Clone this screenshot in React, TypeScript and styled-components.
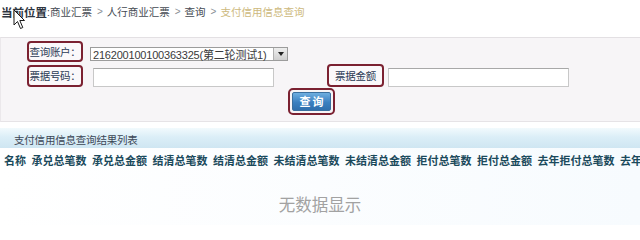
import React from "react";
import styled, { createGlobalStyle } from "styled-components";

const Global = createGlobalStyle`
  html, body { margin: 0; padding: 0; background: #ffffff; }
  body {
    width: 640px;
    height: 225px;
    overflow: hidden;
    font-family: "Liberation Sans", "Noto Sans CJK SC", sans-serif;
  }
`;

const Page = styled.div`
  position: relative;
  width: 640px;
  height: 225px;
  overflow: hidden;
  background: #ffffff;
`;

const Crumbs = styled.div`
  display: flex;
  align-items: center;
  height: 25px;
  padding: 0 0 2px 1px;
  box-sizing: border-box;
  font-size: 10.5px;
  color: #444a52;
  white-space: nowrap;
`;

const CrumbHead = styled.span`
  font-size: 11.5px;
  font-weight: bold;
  color: #2e3540;
`;

const Sep = styled.span`
  color: #8a8f96;
  margin: 0 4px 0 5px;
  font-family: "Liberation Sans", sans-serif;
  font-size: 10px;
`;

const Current = styled.span`
  color: #cdb97c;
`;

const FormPanel = styled.div`
  margin-top: 12px;
  height: 85px;
  box-sizing: border-box;
  border-top: 1px solid #e3e0e3;
  border-bottom: 1px solid #e6e3e6;
  border-left: 1px solid #ebe8eb;
  background: #f7f5f7;
  display: flex;
  flex-direction: column;
`;

const Row = styled.div<{ $top: number }>`
  display: flex;
  align-items: center;
  padding-left: 26px;
  margin-top: ${(p) => p.$top}px;
`;

const Label = styled.div<{ $w: number; $h: number; $ml?: number }>`
  box-sizing: border-box;
  width: ${(p) => p.$w}px;
  height: ${(p) => p.$h}px;
  margin-left: ${(p) => p.$ml ?? 0}px;
  border: 2px solid #7b2131;
  border-radius: 4px;
  background: #faf8fa;
  display: flex;
  align-items: center;
  justify-content: center;
  font-size: 10.5px;
  color: #2a3a54;
  white-space: nowrap;
  letter-spacing: -0.3px;
`;

const Select = styled.div`
  box-sizing: border-box;
  margin-left: 7px;
  margin-top: 5px;
  width: 198px;
  height: 14px;
  border: 1px solid #9c9c9c;
  background: #ffffff;
  display: flex;
  align-items: center;
  font-size: 11px;
  color: #3a3a3a;
  padding-left: 2px;
  white-space: nowrap;
`;

const SelectText = styled.span`
  flex: 1;
  overflow: hidden;
  letter-spacing: -0.2px;
`;

const Arrow = styled.span`
  width: 13px;
  height: 12px;
  background: linear-gradient(#eeeeee, #cfcfcf);
  border-left: 1px solid #b0b0b0;
  display: flex;
  align-items: center;
  justify-content: center;
  &::after {
    content: "";
    border-left: 3.5px solid transparent;
    border-right: 3.5px solid transparent;
    border-top: 4px solid #222;
  }
`;

const Input = styled.div<{ $ml: number; $w: number }>`
  box-sizing: border-box;
  margin-left: ${(p) => p.$ml}px;
  margin-top: 3px;
  width: ${(p) => p.$w}px;
  height: 19px;
  border: 1px solid #c8c8c8;
  border-top-color: #a8a8a8;
  background: #ffffff;
`;

const ButtonRow = styled.div`
  display: flex;
  padding-left: 287px;
  margin-top: 1px;
`;

const ButtonFrame = styled.div`
  box-sizing: border-box;
  width: 47px;
  height: 27px;
  border: 2px solid #7b2131;
  border-radius: 5px;
  padding: 2px;
  display: flex;
`;

const Button = styled.button`
  flex: 1;
  border: 1px solid #3a6f9e;
  border-radius: 2px;
  background: linear-gradient(#6eaee0, #3b80c0 55%, #2f6fad);
  color: #ffffff;
  font-family: "Noto Sans CJK SC", sans-serif;
  font-size: 11px;
  font-weight: bold;
  letter-spacing: 2px;
  padding: 0 0 0 2px;
  line-height: 1;
`;

const ResultBar = styled.div`
  margin-top: 6px;
  height: 20px;
  background: linear-gradient(#f2fafd, #dbeef7 45%, #cfe6f2);
  display: flex;
  align-items: center;
  padding: 2px 0 0 14px;
  box-sizing: border-box;
  font-size: 10.5px;
  color: #3b4655;
  letter-spacing: -0.2px;
`;

const HeadRow = styled.div`
  display: flex;
  gap: 5.5px;
  padding: 4px 0 0 4px;
  height: 18px;
  box-sizing: border-box;
  font-size: 11px;
  font-weight: bold;
  color: #1b4a5c;
  white-space: nowrap;
  overflow: hidden;
  background: linear-gradient(90deg, #ffffff, #f6fbfe);
`;

const Empty = styled.div`
  height: 59px;
  display: flex;
  justify-content: center;
  padding-top: 26px;
  box-sizing: border-box;
  font-family: "Noto Sans CJK SC", sans-serif;
  font-size: 16.5px;
  color: #a2a2a2;
  background: linear-gradient(90deg, #ffffff, #f7fbfe);
`;

const Cursor = styled.svg`
  position: absolute;
  left: 13px;
  top: 9px;
`;

const columns = [
  "名称",
  "承兑总笔数",
  "承兑总金额",
  "结清总笔数",
  "结清总金额",
  "未结清总笔数",
  "未结清总金额",
  "拒付总笔数",
  "拒付总金额",
  "去年拒付总笔数",
  "去年拒付总金额",
];

export default function App() {
  return (
    <Page>
      <Global />
      <Crumbs>
        <CrumbHead>当前位置</CrumbHead>
        <span>:商业汇票</span>
        <Sep>&gt;</Sep>
        <span>人行商业汇票</span>
        <Sep>&gt;</Sep>
        <span>查询</span>
        <Sep>&gt;</Sep>
        <Current>支付信用信息查询</Current>
      </Crumbs>
      <FormPanel>
        <Row $top={3}>
          <Label $w={56} $h={21}>查询账户：</Label>
          <Select>
            <SelectText>216200100100363325(第二轮测试1)</SelectText>
            <Arrow />
          </Select>
        </Row>
        <Row $top={2}>
          <Label $w={56} $h={22}>票据号码：</Label>
          <Input $ml={10} $w={181} />
          <Label $w={57} $h={23} $ml={53}>票据金额</Label>
          <Input $ml={4} $w={181} />
        </Row>
        <ButtonRow>
          <ButtonFrame>
            <Button>查询</Button>
          </ButtonFrame>
        </ButtonRow>
      </FormPanel>
      <ResultBar>支付信用信息查询结果列表</ResultBar>
      <HeadRow>
        {columns.map((c) => (
          <span key={c}>{c}</span>
        ))}
      </HeadRow>
      <Empty>无数据显示</Empty>
      <Cursor width="13" height="21" viewBox="0 0 13 21">
        <path
          d="M1 1 L1 16 L4.5 12.5 L7.5 19.5 L9.8 18.5 L6.8 11.5 L11.5 11.5 Z"
          fill="#ffffff"
          stroke="#1a1a1a"
          strokeWidth="1"
          strokeLinejoin="round"
        />
      </Cursor>
    </Page>
  );
}
